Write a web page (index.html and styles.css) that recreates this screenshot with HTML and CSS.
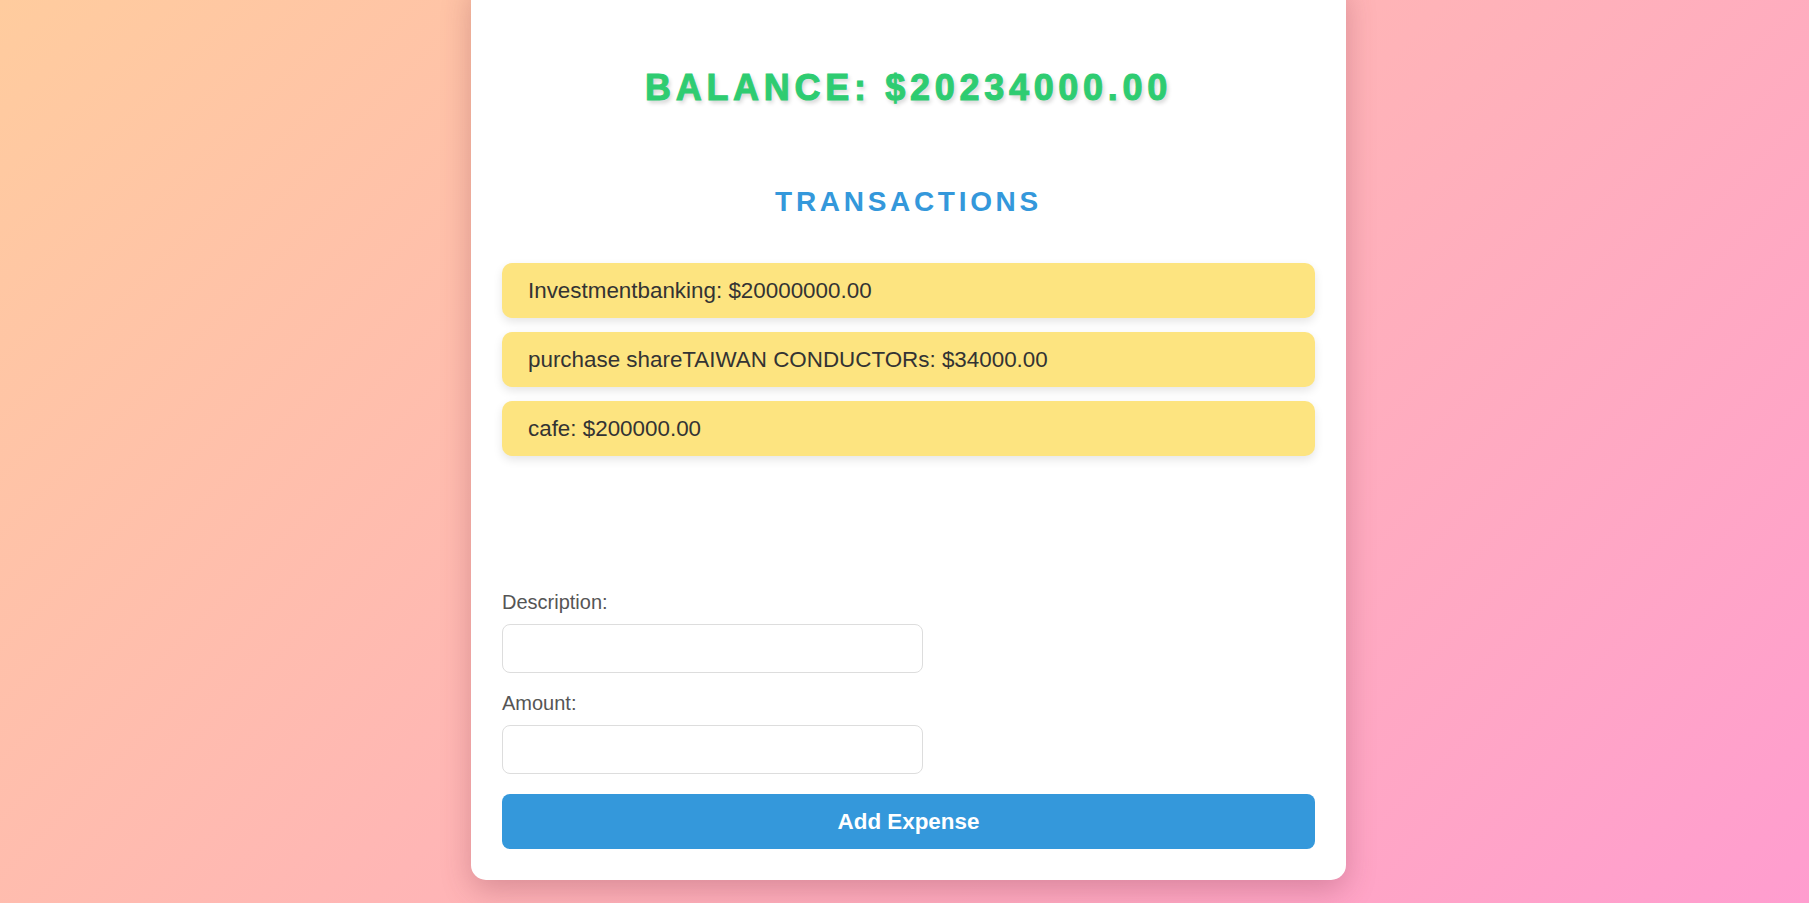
FILE: index.html
```html
<!DOCTYPE html>
<html lang="en">
<head>
<meta charset="utf-8">
<title>Expense Tracker</title>
<link rel="stylesheet" href="styles.css">
</head>
<body>
<div class="page">
  <main class="card">
    <h1 class="balance">Balance: $20234000.00</h1>
    <h2 class="section-title">Transactions</h2>
    <ul class="tx-list">
      <li class="tx-item">Investmentbanking: $20000000.00</li>
      <li class="tx-item">purchase shareTAIWAN CONDUCTORs: $34000.00</li>
      <li class="tx-item">cafe: $200000.00</li>
    </ul>
    <form class="expense-form">
      <label class="field-label" for="desc">Description:</label>
      <input class="field-input" id="desc" type="text">
      <label class="field-label" for="amount">Amount:</label>
      <input class="field-input" id="amount" type="number">
      <button class="submit-btn" type="button">Add Expense</button>
    </form>
  </main>
</div>
</body>
</html>
```
FILE: styles.css
```css
* { box-sizing: border-box; }

html, body {
  margin: 0;
  height: 100%;
  overflow: hidden;
}

body {
  font-family: "Liberation Sans", Arial, sans-serif;
  background: linear-gradient(135deg, #ffcc9e 0%, #ff9dcf 100%);
}

.page {
  display: flex;
  justify-content: center;
  padding-left: 8px;
}

.card {
  width: 875px;
  margin-top: -20px;
  padding: 87px 31px 31px;
  background: #fff;
  border-radius: 15px;
  box-shadow: 0 10px 30px rgba(120, 40, 60, 0.28);
}

.balance {
  margin: 0;
  font-size: 36px;
  line-height: 41px;
  font-weight: 700;
  text-transform: uppercase;
  letter-spacing: 4.7px;
  text-align: center;
  color: #2ecc71;
  -webkit-text-stroke: 1px #2ecc71;
  text-shadow: 2px 3px 4px rgba(0, 0, 0, 0.18);
}

.section-title {
  margin: 78px 0 0;
  font-size: 28px;
  line-height: 32px;
  font-weight: 700;
  text-transform: uppercase;
  letter-spacing: 3.7px;
  text-align: center;
  color: #3498db;
}

.tx-list {
  list-style: none;
  margin: 45px 0 0;
  padding: 0;
  display: flex;
  flex-direction: column;
  gap: 14px;
}

.tx-item {
  padding: 15px 26px;
  font-size: 22.4px;
  line-height: 25px;
  color: #333;
  background: #fde480;
  border-radius: 10px;
  box-shadow: 0 4px 10px rgba(0, 0, 0, 0.1);
}

.expense-form {
  margin-top: 135px;
  display: flex;
  flex-direction: column;
  align-items: flex-start;
}

.field-label {
  font-size: 20px;
  line-height: 23px;
  color: #555;
}

.field-input {
  width: 421px;
  height: 49px;
  margin: 10px 0 19px;
  padding: 0 12px;
  border: 1px solid #ddd;
  border-radius: 8px;
  font-size: 18px;
  font-family: inherit;
  background: #fff;
}

.field-input:last-of-type {
  margin-bottom: 20px;
}

.submit-btn {
  width: 100%;
  padding: 15px 0;
  border: none;
  border-radius: 8px;
  background: #3498db;
  color: #fff;
  font-family: inherit;
  font-size: 22.4px;
  line-height: 25px;
  font-weight: 700;
  cursor: pointer;
}
```
